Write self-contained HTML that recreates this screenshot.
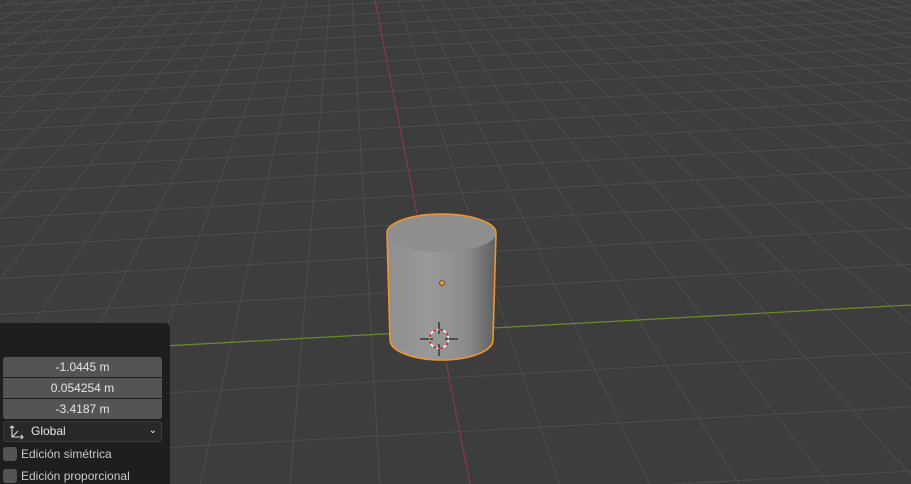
<!DOCTYPE html>
<html><head><meta charset="utf-8"><style>
html,body{margin:0;padding:0;width:911px;height:484px;overflow:hidden;background:#3d3d3d;font-family:"Liberation Sans","DejaVu Sans",sans-serif}
svg{position:absolute;left:0;top:0;overflow:hidden}
#panel{position:absolute;left:0;top:323px;width:170px;height:161px;background:#1e1e1e;border-top-right-radius:5px;overflow:hidden}
.f{position:absolute;left:3px;width:159px;height:20px;background:#545454;color:#e6e6e6;font-size:12px;text-align:center;line-height:20px}
.dd{position:absolute;left:3px;top:98px;width:157px;height:19px;background:#282828;border:1px solid #3a3a3a;border-radius:3px;color:#e6e6e6;font-size:12px;line-height:19px}
.cb{position:absolute;left:3px;width:14px;height:14px;background:#545454;border-radius:3px}
.lb{position:absolute;left:21px;color:#c8c8c8;font-size:12px;line-height:14px}
</style></head><body>
<svg id="g" width="911" height="484" xmlns="http://www.w3.org/2000/svg"></svg>
<svg width="911" height="484" xmlns="http://www.w3.org/2000/svg">
<defs><linearGradient id="bd" x1="0" x2="1"><stop offset="0" stop-color="#8f8f8f"/><stop offset="0.4" stop-color="#999"/><stop offset="0.75" stop-color="#8a8a8a"/><stop offset="1" stop-color="#5e5e5e"/></linearGradient></defs>
<path d="M387,233 L390,340 A51,20 0 0 0 493,340 L496,233 Z" fill="url(#bd)"/>
<ellipse cx="441.5" cy="233" rx="54.5" ry="19" fill="#8e8e8e"/>
<path d="M387,233 A54.5,19 0 0 1 496,233 L493,340 A51.5,20 0 0 1 390,340 Z" fill="none" stroke="#f0952e" stroke-width="1.6"/>
<circle cx="442" cy="283" r="2.5" fill="#f0952e" stroke="#333" stroke-width="0.6"/>
<circle cx="439" cy="339" r="9.5" fill="none" stroke="#fff" stroke-width="1.5" stroke-dasharray="4 3"/>
<circle cx="439" cy="339" r="9.5" fill="none" stroke="#d22" stroke-width="1.5" stroke-dasharray="3 4" stroke-dashoffset="3.5"/>
<path d="M439,322v12M439,344v12M420,339h13M445,339h13" stroke="#222" stroke-width="1.2"/>
</svg>
<div id="panel">
<div class="f" style="top:34px;border-radius:3px 3px 0 0">-1.0445 m</div>
<div class="f" style="top:55px">0.054254 m</div>
<div class="f" style="top:76px;border-radius:0 0 3px 3px">-3.4187 m</div>
<div class="dd"><svg width="16" height="16" style="position:absolute;left:4px;top:2px"><path d="M4,2v11h11M4,13l6-6M2,4l2-2 2,2M13,11l2,2-2,2" stroke="#ddd" fill="none" stroke-width="1.1"/></svg><span style="position:absolute;left:27px">Global</span><span style="position:absolute;right:4px;top:-1px;font-size:10px">⌄</span></div>
<div class="cb" style="top:124px"></div><div class="lb" style="top:124px">Edición simétrica</div>
<div class="cb" style="top:146px"></div><div class="lb" style="top:146px">Edición proporcional</div>
</div>
<script>
var g=document.getElementById('g'),s='';
var yh=-300,A=9075;
for(var n=1;n<400;n++){var y=yh+A/(n+0.4);if(y>560)continue;if(y<-40)break;
s+='<line x1="0" y1="'+(y+25)+'" x2="911" y2="'+(y-25)+'" stroke="#4d4d4d" stroke-width="1"/>';}
var vy=-162,vx=343;
for(var k=-60;k<60;k++){var m=0.196+k*0.139;if(k==0)continue;
var x0=vx+m*(0-vy),x1=vx+m*(484-vy);
s+='<line x1="'+x0+'" y1="0" x2="'+x1+'" y2="484" stroke="#4d4d4d" stroke-width="1"/>';}
s+='<line x1="0" y1="355" x2="911" y2="305" stroke="#6b8a2c" stroke-width="1.2"/>';
s+='<line x1="375" y1="0" x2="470" y2="484" stroke="#8a3a3e" stroke-width="1.2"/>';
g.innerHTML=s;
</script>
</body></html>
